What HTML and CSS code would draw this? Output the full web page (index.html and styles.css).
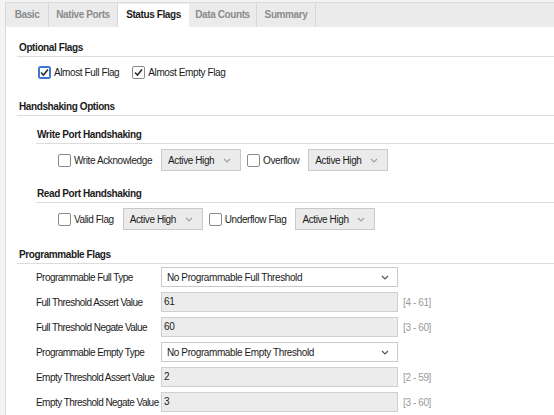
FILE: index.html
```html
<!doctype html>
<html>

<head>
    <title>FIFO Generator - Status Flags</title>
    <link rel="stylesheet" href="styles.css">
</head>

<body>
    <div class="panel">
        <div class="tabs">
            <div class="tab t-basic">Basic</div>
            <div class="tab t-native">Native Ports</div>
            <div class="tab t-status active">Status Flags</div>
            <div class="tab t-data">Data Counts</div>
            <div class="tab t-summary">Summary</div>
        </div>

        <div class="heading h-optional">Optional Flags</div>
        <div class="flag-row">
            <label class="check">
                <span class="box checked focus">
                    <svg viewBox="0 0 11 11"><polyline points="2,5.5 4.5,8 9,2.5" /></svg>
                </span>
                Almost Full Flag
            </label>
            <label class="check">
                <span class="box checked">
                    <svg viewBox="0 0 11 11"><polyline points="2,5.5 4.5,8 9,2.5" /></svg>
                </span>
                Almost Empty Flag
            </label>
        </div>

        <div class="heading h-handshake">Handshaking Options</div>

        <div class="subheading h-write">Write Port Handshaking</div>
        <div class="hs-row r-write">
            <label class="check"><span class="box"></span>Write Acknowledge</label>
            <div class="select small">
                <span>Active High</span>
                <svg class="chev" viewBox="0 0 8 5"><polyline points="1,1 4,4 7,1" /></svg>
            </div>
            <label class="check"><span class="box"></span>Overflow</label>
            <div class="select small">
                <span>Active High</span>
                <svg class="chev" viewBox="0 0 8 5"><polyline points="1,1 4,4 7,1" /></svg>
            </div>
        </div>

        <div class="subheading h-read">Read Port Handshaking</div>
        <div class="hs-row r-read">
            <label class="check"><span class="box"></span>Valid Flag</label>
            <div class="select small">
                <span>Active High</span>
                <svg class="chev" viewBox="0 0 8 5"><polyline points="1,1 4,4 7,1" /></svg>
            </div>
            <label class="check"><span class="box"></span>Underflow Flag</label>
            <div class="select small">
                <span>Active High</span>
                <svg class="chev" viewBox="0 0 8 5"><polyline points="1,1 4,4 7,1" /></svg>
            </div>
        </div>

        <div class="heading h-prog">Programmable Flags</div>
        <div class="prog-grid">
            <div class="lbl">Programmable Full Type</div>
            <div class="select wide">
                <span>No Programmable Full Threshold</span>
                <svg class="chev dark" viewBox="0 0 8 5"><polyline points="1,1 4,4 7,1" /></svg>
            </div>
            <div class="range"></div>

            <div class="lbl">Full Threshold Assert Value</div>
            <div class="field">61</div>
            <div class="range">[4 - 61]</div>

            <div class="lbl">Full Threshold Negate Value</div>
            <div class="field">60</div>
            <div class="range">[3 - 60]</div>

            <div class="lbl">Programmable Empty Type</div>
            <div class="select wide">
                <span>No Programmable Empty Threshold</span>
                <svg class="chev dark" viewBox="0 0 8 5"><polyline points="1,1 4,4 7,1" /></svg>
            </div>
            <div class="range"></div>

            <div class="lbl">Empty Threshold Assert Value</div>
            <div class="field">2</div>
            <div class="range">[2 - 59]</div>

            <div class="lbl">Empty Threshold Negate Value</div>
            <div class="field">3</div>
            <div class="range">[3 - 60]</div>
        </div>
    </div>
</body>

</html>
```

FILE: styles.css
```css
* {
    margin: 0;
    box-sizing: border-box;
}

body {
    background-color: #f4f4f4;
    font-family: "Liberation Sans", Arial, sans-serif;
    font-size: 10px;
    letter-spacing: -0.4px;
    color: #1b1b1b;
    overflow: hidden;
}

.panel {
    margin-left: 5px;
    height: 415px;
    background-color: white;
    border-left: 1px solid #d8d8d8;
}

/* tab strip */
.tabs {
    margin-top: 2px;
    height: 25px;
    display: flex;
    align-items: flex-end;
    background-color: #ebebeb;
    border-top: 1px solid #dadada;
}

.tab {
    height: 23px;
    line-height: 22px;
    text-align: center;
    font-weight: bold;
    color: #8c8c8c;
    border-right: 1px solid #d6d6d6;
}

.tab.active {
    background-color: white;
    color: #1b1b1b;
    border-right: none;
}

.t-basic { width: 43px; }
.t-native { width: 69px; }
.t-status { width: 71px; }
.t-data { width: 68px; }
.t-summary { width: 59px; }

/* section headings */
.heading,
.subheading {
    font-weight: bold;
    line-height: 12px;
    padding: 0 0 2px 2px;
    border-bottom: 1px solid #dcdcdc;
}

.heading { margin-left: 11px; }
.subheading { margin-left: 30px; padding-left: 1px; }

.h-optional { margin-top: 15px; }
.h-handshake { margin-top: 22px; }
.h-write { margin-top: 13px; }
.h-read { margin-top: 17px; }
.h-prog { margin-top: 19px; }

/* checkboxes */
.check {
    display: flex;
    align-items: center;
    gap: 3px;
    white-space: nowrap;
}

.box {
    width: 13px;
    height: 13px;
    background-color: white;
    border: 1px solid #8a8a8a;
    border-radius: 2px;
}

.box svg {
    display: block;
    width: 11px;
    height: 11px;
    fill: none;
    stroke: #2e2e2e;
    stroke-width: 1.6;
}

.box.focus {
    border-color: #3d78d6;
    box-shadow: inset 0 0 0 1px #3d78d6;
}

.flag-row {
    margin-top: 8px;
    height: 14px;
    padding-left: 32px;
    display: flex;
    align-items: center;
    gap: 13px;
}

/* handshaking rows */
.hs-row {
    height: 22px;
    padding-left: 52px;
    display: flex;
    align-items: center;
}

.hs-row .check { margin-right: 9px; }
.hs-row .select { margin-right: 6px; }

.r-write { margin-top: 5px; }
.r-read { margin-top: 5px; }

.select {
    display: flex;
    align-items: center;
    justify-content: space-between;
    border: 1px solid #c9c9c9;
    white-space: nowrap;
}

.select.small {
    width: 80px;
    height: 22px;
    padding: 0 9px 0 6px;
    background-color: #ebebeb;
}

.select.wide {
    height: 20px;
    padding: 0 8px 0 5px;
    background-color: white;
}

.chev {
    width: 8px;
    height: 5px;
    fill: none;
    stroke: #a0a0a0;
    stroke-width: 1.2;
}

.chev.dark { stroke: #555; }

/* programmable flags grid */
.prog-grid {
    margin-top: 3px;
    padding-left: 30px;
    display: grid;
    grid-template-columns: 120px 237px auto;
    grid-auto-rows: 20px;
    column-gap: 5px;
    row-gap: 5px;
    align-items: center;
}

.lbl {
    white-space: nowrap;
    letter-spacing: -0.55px;
}

.field {
    height: 20px;
    line-height: 18px;
    padding-left: 2px;
    background-color: #ececec;
    border: 1px solid #cfcfcf;
}

.range {
    color: #9a9a9a;
}
```
